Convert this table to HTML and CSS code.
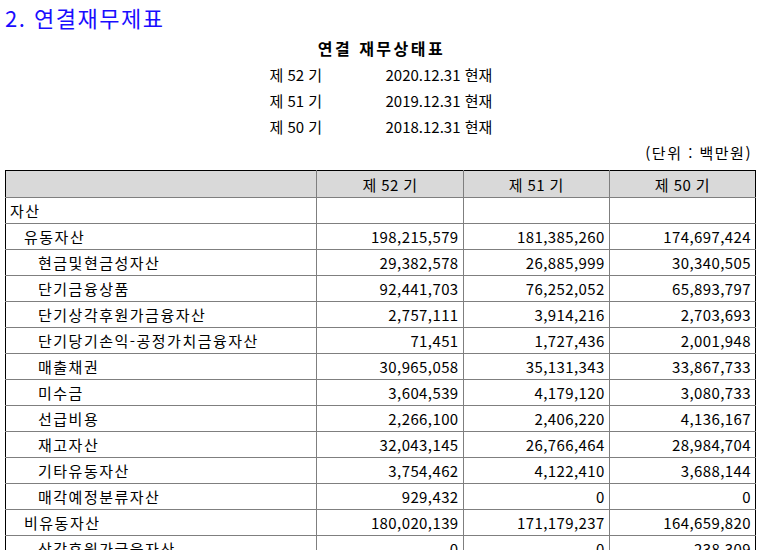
FILE: index.html
```html
<!DOCTYPE html>
<html lang="ko">
<head>
<meta charset="utf-8">
<link rel="stylesheet" href="styles.css">
</head>
<body>
<h2 class="section-title">2. 연결재무제표</h2>
<div class="statement-head">
  <div class="statement-name">연결 재무상태표</div>
  <div class="periods">
    <span>제 52 기</span><span>2020.12.31 현재</span>
    <span>제 51 기</span><span>2019.12.31 현재</span>
    <span>제 50 기</span><span>2018.12.31 현재</span>
  </div>
  <div class="unit">(단위 : 백만원)</div>
</div>
<table class="fs">
  <colgroup>
    <col class="c-label"><col class="c-num"><col class="c-num"><col class="c-num">
  </colgroup>
  <thead>
    <tr><th></th><th>제 52 기</th><th>제 51 기</th><th>제 50 기</th></tr>
  </thead>
  <tbody>
    <tr><td class="l0">자산</td><td></td><td></td><td></td></tr>
    <tr><td class="l1">유동자산</td><td>198,215,579</td><td>181,385,260</td><td>174,697,424</td></tr>
    <tr><td class="l2">현금및현금성자산</td><td>29,382,578</td><td>26,885,999</td><td>30,340,505</td></tr>
    <tr><td class="l2">단기금융상품</td><td>92,441,703</td><td>76,252,052</td><td>65,893,797</td></tr>
    <tr><td class="l2">단기상각후원가금융자산</td><td>2,757,111</td><td>3,914,216</td><td>2,703,693</td></tr>
    <tr><td class="l2">단기당기손익-공정가치금융자산</td><td>71,451</td><td>1,727,436</td><td>2,001,948</td></tr>
    <tr><td class="l2">매출채권</td><td>30,965,058</td><td>35,131,343</td><td>33,867,733</td></tr>
    <tr><td class="l2">미수금</td><td>3,604,539</td><td>4,179,120</td><td>3,080,733</td></tr>
    <tr><td class="l2">선급비용</td><td>2,266,100</td><td>2,406,220</td><td>4,136,167</td></tr>
    <tr><td class="l2">재고자산</td><td>32,043,145</td><td>26,766,464</td><td>28,984,704</td></tr>
    <tr><td class="l2">기타유동자산</td><td>3,754,462</td><td>4,122,410</td><td>3,688,144</td></tr>
    <tr><td class="l2">매각예정분류자산</td><td>929,432</td><td>0</td><td>0</td></tr>
    <tr><td class="l1">비유동자산</td><td>180,020,139</td><td>171,179,237</td><td>164,659,820</td></tr>
    <tr><td class="l2">상각후원가금융자산</td><td>0</td><td>0</td><td>238,309</td></tr>
  </tbody>
</table>
</body>
</html>
```
FILE: styles.css
```css
html, body {
  margin: 0;
  padding: 0;
  background: #fff;
  color: #000;
  font-family: "Noto Sans CJK KR", "Noto Sans", sans-serif;
}
body {
  padding: 0 5px;
}
.section-title {
  margin: 0;
  height: 34px;
  line-height: 34px;
  font-size: 22px;
  font-weight: normal;
  color: #1a0dff;
  letter-spacing: 1.5px;
}
.statement-head {
  font-size: 15px;
}
.statement-name {
  text-align: center;
  font-weight: bold;
  font-size: 16px;
  letter-spacing: 2.5px;
  height: 28px;
  line-height: 28px;
}
.periods {
  display: grid;
  grid-template-columns: 116px 116px;
  justify-content: center;
  grid-auto-rows: 26px;
  line-height: 26px;
  white-space: nowrap;
  padding-left: 8px;
}
.unit {
  text-align: right;
  height: 26px;
  line-height: 26px;
  padding-right: 6px;
  letter-spacing: 1.5px;
}
.fs {
  margin-top: 4px;
  width: 751px;
  border-collapse: collapse;
  table-layout: fixed;
  font-size: 15px;
  border: 1px solid #000;
}
.c-label { width: 311px; }
.c-num { width: 146px; }
.fs th, .fs td {
  border: 1px solid #7f7f7f;
  height: 25px;
  padding: 0 4px;
  line-height: 25px;
  white-space: nowrap;
  overflow: hidden;
  letter-spacing: 0.4px;
}
.fs thead tr:first-child th {
  border-top: 1px solid #000;
}
.fs tr > :first-child { border-left: 1px solid #000; }
.fs tr > :last-child { border-right: 1px solid #000; }
.fs th {
  background: #d9d9d9;
  font-weight: normal;
  text-align: center;
  height: 26px;
}
.fs td { text-align: right; }
.fs td.l0, .fs td.l1, .fs td.l2 { text-align: left; letter-spacing: 1.5px; }
.fs td.l0 { padding-left: 4px; }
.fs td.l1 { padding-left: 18px; }
.fs td.l2 { padding-left: 32px; }
```
